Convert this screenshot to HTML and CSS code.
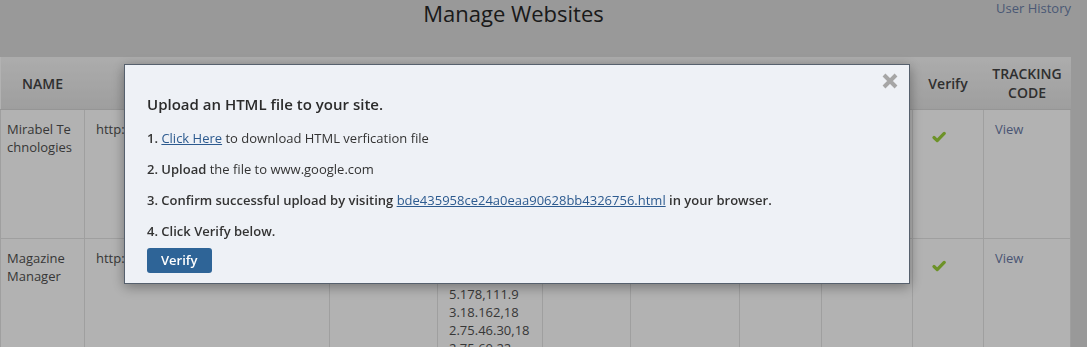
FILE: index.html
```html
<!DOCTYPE html>
<html lang="en">
<head>
<meta charset="utf-8">
<title>Manage Websites</title>
<link rel="stylesheet" href="styles.css">
</head>
<body>
<header class="top">
  <h1 class="title">Manage Websites</h1>
  <a class="user-history" href="#">User History</a>
</header>

<table class="sites">
  <colgroup>
    <col style="width:84px"><col style="width:245px"><col style="width:108px"><col style="width:105px"><col style="width:88px"><col style="width:109px"><col style="width:82px"><col style="width:91px"><col style="width:71px"><col style="width:87px">
  </colgroup>
  <thead>
    <tr>
      <th>NAME</th><th>URL</th><th>STATUS</th><th>IP FILTER</th><th>VISITS</th><th>CREATED</th><th>OWNER</th><th>TYPE</th><th>Verify</th><th>TRACKING CODE</th>
    </tr>
  </thead>
  <tbody>
    <tr class="row-one">
      <td class="name">Mirabel Technologies</td>
      <td>http://www.mirabeltechnologies.com</td>
      <td></td><td></td><td></td><td></td><td></td><td></td>
      <td class="verify"><svg class="check" width="14" height="12" viewBox="0 0 14 12"><polyline points="2,6.5 5.2,9.6 12.2,2.4" fill="none" stroke="#9dd23a" stroke-width="3.2" stroke-linecap="round" stroke-linejoin="round"/></svg></td>
      <td><a class="view" href="#">View</a></td>
    </tr>
    <tr>
      <td class="name">Magazine Manager</td>
      <td>http://www.magazinemanager.com</td>
      <td></td>
      <td class="ips">52.14.127.19<br>4.178.111.40<br>5.178,111.9<br>3.18.162,18<br>2.75.46.30,18<br>2.75.60.22</td>
      <td></td><td></td><td></td><td></td>
      <td class="verify"><svg class="check" width="14" height="12" viewBox="0 0 14 12"><polyline points="2,6.5 5.2,9.6 12.2,2.4" fill="none" stroke="#9dd23a" stroke-width="3.2" stroke-linecap="round" stroke-linejoin="round"/></svg></td>
      <td><a class="view" href="#">View</a></td>
    </tr>
  </tbody>
</table>

<div class="backdrop"></div>

<div class="modal">
  <a class="close" href="#" aria-label="Close"><svg width="16" height="16" viewBox="0 0 16 16"><path d="M2 2 L14 14 M14 2 L2 14" stroke="#a6a6a6" stroke-width="4" fill="none"/></svg></a>
  <h2 class="modal-title">Upload an HTML file to your site.</h2>
  <div class="steps">
    <p><b>1.</b> <a href="#">Click Here</a> to download HTML verfication file</p>
    <p><b>2. Upload</b> the file to www.google.com</p>
    <p><b>3. Confirm successful upload by visiting</b> <a href="#">bde435958ce24a0eaa90628bb4326756.html</a> <b>in your browser.</b></p>
    <p><b>4. Click Verify below.</b></p>
  </div>
  <button class="btn-verify" type="button">Verify</button>
</div>
</body>
</html>
```

FILE: styles.css
```css
html, body {
  margin: 0;
  padding: 0;
}
body {
  background: #dcdcdc;
  font-family: "Open Sans", "Noto Sans", sans-serif;
  color: #333;
  overflow: hidden;
  height: 347px;
}

.top {
  display: grid;
  height: 57px;
}
.title {
  grid-area: 1 / 1;
  margin: 0;
  padding-right: 60px;
  text-align: center;
  font-size: 22px;
  font-weight: 400;
  line-height: 26px;
  color: #262626;
}
.user-history {
  grid-area: 1 / 1;
  justify-self: end;
  align-self: start;
  margin-right: 16px;
  font-size: 13px;
  line-height: 16px;
  color: #6a7fa8;
  text-decoration: none;
}

.sites {
  width: 1070px;
  table-layout: fixed;
  border-collapse: collapse;
  background: #fff;
  font-size: 13px;
}
.sites th {
  height: 52px;
  padding: 0 8px;
  background: linear-gradient(#f7f7f7, #e3e3e3);
  font-size: 14px;
  font-weight: 600;
  color: #444;
  line-height: 19px;
  text-align: center;
  vertical-align: middle;
  border-bottom: 1px solid #d6d6d6;
}
.sites td {
  padding: 10px 11px;
  border: 1px solid #e4e4e4;
  vertical-align: top;
  line-height: 18px;
  color: #505050;
  overflow: hidden;
  white-space: nowrap;
}
.sites td.name {
  padding-left: 6px;
  padding-right: 12px;
  white-space: normal;
  word-break: break-all;
}
.row-one {
  height: 129px;
}
.verify .check {
  display: block;
  margin: 11px 0 0 8px;
}
.view {
  color: #6a7aa6;
  text-decoration: none;
}

.backdrop {
  position: fixed;
  inset: 0;
  background: rgba(0, 0, 0, 0.3);
}

.modal {
  position: fixed;
  top: 64px;
  left: 124px;
  width: 786px;
  height: 220px;
  box-sizing: border-box;
  padding: 29px 22px 0 22px;
  background: #eef1f6;
  border: 1px solid #56606d;
  box-shadow: 0 3px 12px rgba(0, 0, 0, 0.35);
}
.close {
  position: absolute;
  top: 8px;
  right: 11px;
  line-height: 0;
}
.modal-title {
  margin: 0 0 15px;
  font-size: 15px;
  font-weight: 600;
  line-height: 20px;
  color: #2b2b2b;
}
.steps p {
  margin: 0 0 13px;
  font-size: 13px;
  line-height: 18px;
  color: #333;
}
.steps p:last-child {
  margin-bottom: 0;
}
.steps b {
  font-weight: 600;
}
.steps a {
  color: #2c5a8f;
  text-decoration: underline;
}
.btn-verify {
  display: block;
  margin-top: 8px;
  height: 25px;
  padding: 0 14px;
  border: 0;
  border-radius: 3px;
  background: #2e6497;
  color: #fff;
  font-family: "Open Sans", "Noto Sans", sans-serif;
  font-size: 13px;
  font-weight: 600;
  line-height: 25px;
}
```
